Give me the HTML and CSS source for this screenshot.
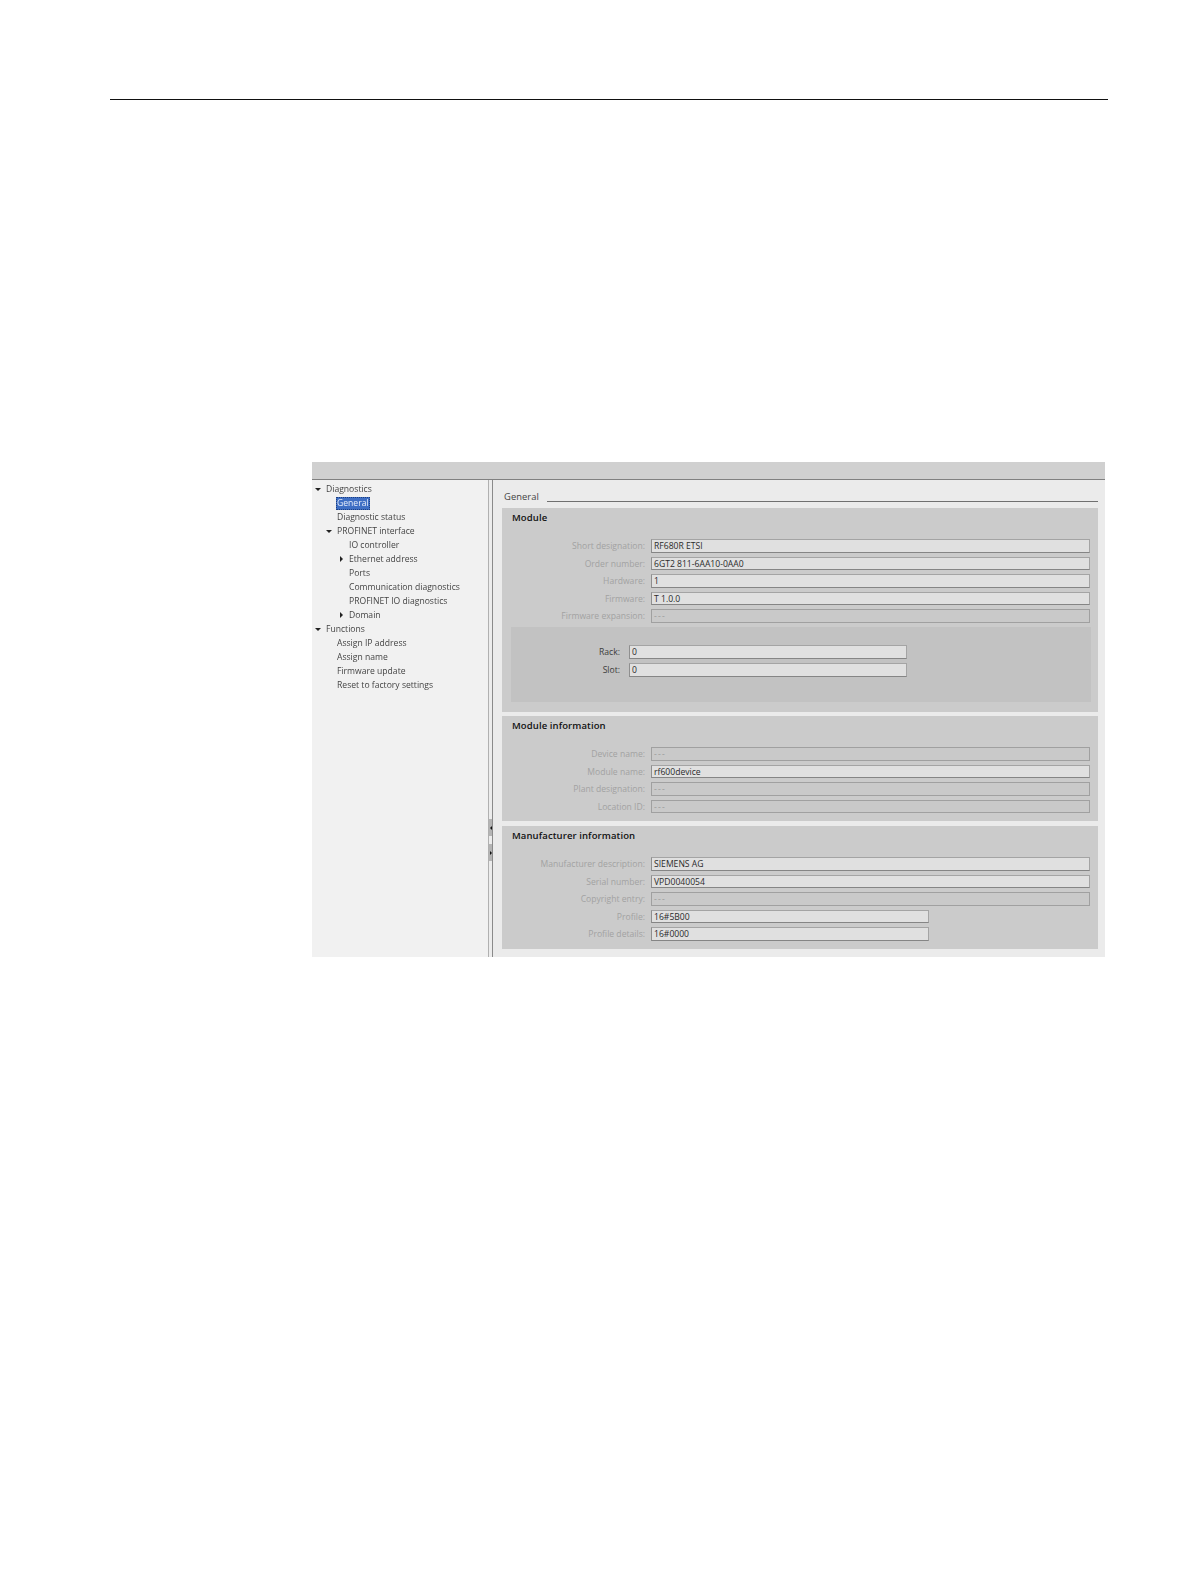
FILE: index.html
```html
<!DOCTYPE html>
<html lang="en">
<head>
<meta charset="utf-8">
<title>General diagnostics</title>
<link rel="stylesheet" href="styles.css">
</head>
<body>
<div class="page">
  <hr class="rule">
  <div class="app">
    <div class="app-head"></div>
    <div class="app-body">
      <nav class="tree">
        <div class="node l0"><span class="tw down"></span>Diagnostics</div>
        <div class="node l1"><span class="sel">General</span></div>
        <div class="node l1">Diagnostic status</div>
        <div class="node l1"><span class="tw down"></span>PROFINET interface</div>
        <div class="node l2">IO controller</div>
        <div class="node l2"><span class="tw right"></span>Ethernet address</div>
        <div class="node l2">Ports</div>
        <div class="node l2">Communication diagnostics</div>
        <div class="node l2">PROFINET IO diagnostics</div>
        <div class="node l2"><span class="tw right"></span>Domain</div>
        <div class="node l0"><span class="tw down"></span>Functions</div>
        <div class="node l1">Assign IP address</div>
        <div class="node l1">Assign name</div>
        <div class="node l1">Firmware update</div>
        <div class="node l1">Reset to factory settings</div>
      </nav>
      <div class="splitter">
        <div class="grip"><span class="arrow-left"></span></div>
        <div class="grip"><span class="arrow-right"></span></div>
      </div>
      <main class="content">
        <div class="section-head"><span class="section-title">General</span><span class="section-line"></span></div>

        <section class="panel panel-module">
          <h2 class="panel-title">Module</h2>
          <div class="fields">
            <div class="field"><label class="lbl">Short designation:</label><div class="box">RF680R ETSI</div></div>
            <div class="field"><label class="lbl">Order number:</label><div class="box">6GT2 811-6AA10-0AA0</div></div>
            <div class="field"><label class="lbl">Hardware:</label><div class="box">1</div></div>
            <div class="field"><label class="lbl">Firmware:</label><div class="box">T 1.0.0</div></div>
            <div class="field"><label class="lbl">Firmware expansion:</label><div class="box off">---</div></div>
          </div>
          <div class="subpanel">
            <div class="subfield"><label class="lbl dark">Rack:</label><div class="box sub">0</div></div>
            <div class="subfield"><label class="lbl dark">Slot:</label><div class="box sub">0</div></div>
          </div>
        </section>

        <section class="panel panel-info">
          <h2 class="panel-title">Module information</h2>
          <div class="fields">
            <div class="field"><label class="lbl">Device name:</label><div class="box off">---</div></div>
            <div class="field"><label class="lbl">Module name:</label><div class="box">rf600device</div></div>
            <div class="field"><label class="lbl">Plant designation:</label><div class="box off">---</div></div>
            <div class="field"><label class="lbl">Location ID:</label><div class="box off">---</div></div>
          </div>
        </section>

        <section class="panel panel-maker">
          <h2 class="panel-title">Manufacturer information</h2>
          <div class="fields">
            <div class="field"><label class="lbl">Manufacturer description:</label><div class="box">SIEMENS AG</div></div>
            <div class="field"><label class="lbl">Serial number:</label><div class="box">VPD0040054</div></div>
            <div class="field"><label class="lbl">Copyright entry:</label><div class="box off">---</div></div>
            <div class="field"><label class="lbl">Profile:</label><div class="box short">16#5B00</div></div>
            <div class="field"><label class="lbl">Profile details:</label><div class="box short">16#0000</div></div>
          </div>
        </section>
      </main>
    </div>
  </div>
</div>
</body>
</html>
```
FILE: styles.css
```css
* { box-sizing: border-box; }
html, body { margin: 0; padding: 0; background: #fff; }
body { font-family: "Open Sans", "Liberation Sans", sans-serif; font-size: 8.6px; color: #333; }
.page { height: 1587px; overflow: hidden; padding-top: 99px; }
.rule { height: 1px; margin: 0 83px 0 110px; border: 0; background: #111; }

.app { width: 793px; height: 495px; margin: 362px 0 0 312px; display: flex; flex-direction: column; filter: blur(.35px); }
.app-head { height: 18px; flex: none; background: #d0d0d0; border-bottom: 1px solid #808080; }
.app-body { flex: 1; display: flex; min-height: 0; }

.tree { width: 176px; flex: none; background: #f1f1f1; padding-top: 2px; }
.node { height: 14px; line-height: 14px; color: #444; white-space: nowrap; position: relative; }
.l0 { padding-left: 14px; }
.l1 { padding-left: 25px; }
.l2 { padding-left: 37px; }
.sel { display: inline-block; height: 13px; line-height: 13px; margin-left: -1px; padding: 0 1px; background: #3f6fc4; color: #e8eefa; outline: 1px dotted #1d3f80; outline-offset: -1px; }
.tw { position: absolute; width: 0; height: 0; }
.tw.down { top: 6px; margin-left: -11px; border-left: 3.5px solid transparent; border-right: 3.5px solid transparent; border-top: 3.5px solid #222; }
.tw.right { top: 4px; margin-left: -9px; border-top: 3.5px solid transparent; border-bottom: 3.5px solid transparent; border-left: 3.5px solid #222; }

.splitter { width: 5px; flex: none; background: #ececec; border-left: 1px solid #b0b0b0; border-right: 1px solid #8a8a8a; padding-top: 339px; display: flex; flex-direction: column; gap: 8px; }
.grip { height: 17px; background: #b4b4b4; display: flex; align-items: center; justify-content: center; }
.arrow-left { border-top: 2.5px solid transparent; border-bottom: 2.5px solid transparent; border-right: 2.5px solid #111; }
.arrow-right { border-top: 2.5px solid transparent; border-bottom: 2.5px solid transparent; border-left: 2.5px solid #111; }

.content { flex: 1; min-width: 0; background: #ebebeb; padding: 9px 7px 0 9px; display: flex; flex-direction: column; }
.section-head { height: 20px; display: flex; align-items: flex-start; gap: 8px; margin-left: 2px; }
.section-title { font-size: 9.4px; line-height: 16px; letter-spacing: .06px; color: #444; }
.section-line { flex: 1; height: 1px; margin-top: 12px; background: #707070; }

.panel { background: #cbcbcb; padding: 3px 8px 0 0; }
.panel-module { height: 204px; margin-top: -1px; }
.panel-info { height: 105px; margin-top: 4px; }
.panel-maker { height: 123px; margin-top: 5px; }
.panel-title { margin: 0 0 0 10px; height: 14px; font-size: 9.5px; line-height: 14px; font-weight: 600; letter-spacing: .1px; color: #111; }
.fields { display: flex; flex-direction: column; gap: 4px; margin-top: 14px; }
.field { height: 13.6px; display: grid; grid-template-columns: 143px 1fr; column-gap: 6px; align-items: center; }
.lbl { text-align: right; color: #a2a2a2; white-space: nowrap; line-height: 14px; height: 13.6px; }
.lbl.dark { color: #3c3c3c; }
.box { height: 13.6px; line-height: 12px; padding-left: 2px; letter-spacing: 0; color: #2b2b2b; background: #e0e0e0; border: 1px solid #a4a4a4; border-bottom-color: #858585; border-left-color: #8f8f8f; white-space: nowrap; overflow: hidden; }
.box.off { background: #c9c9c9; color: #9a9a9a; border-color: #a0a0a0; letter-spacing: 1.2px; }
.box.short { width: 278px; }
.box.sub { width: 278px; }

.subpanel { height: 75px; margin: 4px -1px 0 9px; background: #c2c2c2; padding-top: 18px; display: flex; flex-direction: column; gap: 4.4px; }
.subfield { height: 13.6px; display: grid; grid-template-columns: 109px 278px; column-gap: 9px; align-items: center; }
```
